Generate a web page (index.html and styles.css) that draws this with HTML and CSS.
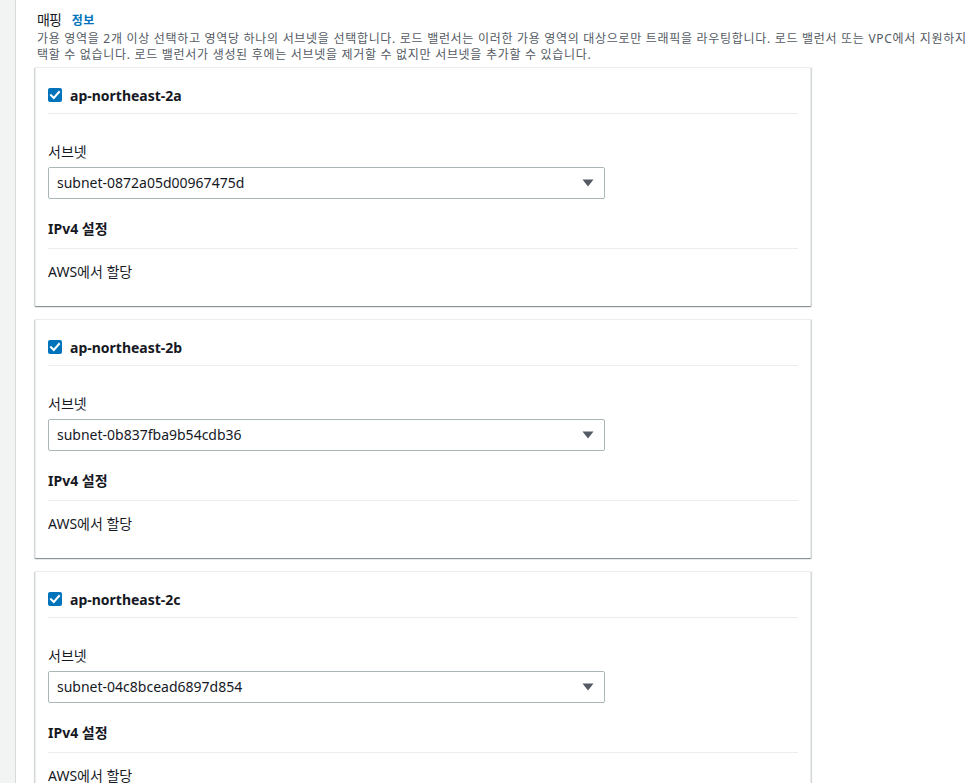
FILE: index.html
```html
<!DOCTYPE html>
<html lang="ko">
<head>
<meta charset="utf-8">
<title>매핑</title>
<link rel="stylesheet" href="styles.css">
</head>
<body>
<div class="page">
  <div class="rail"></div>
  <main class="main">
    <div class="heading">
      <span class="heading-title">매핑</span>
      <a class="info" href="#">정보</a>
    </div>
    <p class="desc"><span class="line">가용 영역을 2개 이상 선택하고 영역당 하나의 서브넷을 선택합니다. 로드 밸런서는 이러한 가용 영역의 대상으로만 트래픽을 라우팅합니다. 로드 밸런서 또는 VPC에서 지원하지 않는 가용 영역은 선</span><span class="line">택할 수 없습니다. 로드 밸런서가 생성된 후에는 서브넷을 제거할 수 없지만 서브넷을 추가할 수 있습니다.</span></p>

    <div class="cards">
      <section class="card">
        <div class="card-head">
          <span class="checkbox"><svg viewBox="0 0 14 14" width="14" height="14"><path d="M3 7.2 L5.8 10 L11 4" fill="none" stroke="#fff" stroke-width="2" stroke-linecap="square"/></svg></span>
          <span class="zone">ap-northeast-2a</span>
        </div>
        <div class="card-body">
          <div class="label">서브넷</div>
          <div class="select">
            <span>subnet-0872a05d00967475d</span>
            <svg class="caret" viewBox="0 0 12 8" width="12" height="8"><path d="M0.5 0.5 H11.5 L6 7.5 Z" fill="#545b64"/></svg>
          </div>
          <div class="sub-title">IPv4 설정</div>
          <div class="value">AWS에서 할당</div>
        </div>
      </section>

      <section class="card">
        <div class="card-head">
          <span class="checkbox"><svg viewBox="0 0 14 14" width="14" height="14"><path d="M3 7.2 L5.8 10 L11 4" fill="none" stroke="#fff" stroke-width="2" stroke-linecap="square"/></svg></span>
          <span class="zone">ap-northeast-2b</span>
        </div>
        <div class="card-body">
          <div class="label">서브넷</div>
          <div class="select">
            <span>subnet-0b837fba9b54cdb36</span>
            <svg class="caret" viewBox="0 0 12 8" width="12" height="8"><path d="M0.5 0.5 H11.5 L6 7.5 Z" fill="#545b64"/></svg>
          </div>
          <div class="sub-title">IPv4 설정</div>
          <div class="value">AWS에서 할당</div>
        </div>
      </section>

      <section class="card">
        <div class="card-head">
          <span class="checkbox"><svg viewBox="0 0 14 14" width="14" height="14"><path d="M3 7.2 L5.8 10 L11 4" fill="none" stroke="#fff" stroke-width="2" stroke-linecap="square"/></svg></span>
          <span class="zone">ap-northeast-2c</span>
        </div>
        <div class="card-body">
          <div class="label">서브넷</div>
          <div class="select">
            <span>subnet-04c8bcead6897d854</span>
            <svg class="caret" viewBox="0 0 12 8" width="12" height="8"><path d="M0.5 0.5 H11.5 L6 7.5 Z" fill="#545b64"/></svg>
          </div>
          <div class="sub-title">IPv4 설정</div>
          <div class="value">AWS에서 할당</div>
        </div>
      </section>
    </div>
  </main>
</div>
</body>
</html>
```

FILE: styles.css
```css
html, body {
  margin: 0;
  padding: 0;
  height: 100%;
  overflow: hidden;
  background: #ffffff;
}

body {
  font-family: "Noto Sans", "Noto Sans CJK KR", sans-serif;
  color: #16191f;
  font-size: 14px;
  line-height: 20px;
}

.page {
  display: flex;
  min-height: 100%;
}

.rail {
  flex: 0 0 15px;
  background: #f2f3f3;
  border-right: 1px solid #d5dbdb;
}

.main {
  flex: 1;
  padding: 10px 0 0 19px;
  min-width: 0;
  overflow: hidden;
}

.heading {
  display: flex;
  align-items: baseline;
  padding-left: 2px;
}

.heading-title {
  font-size: 14px;
  letter-spacing: -1px;
}

.info {
  margin-left: 11px;
  font-size: 12px;
  font-weight: 700;
  color: #0073bb;
  text-decoration: none;
  letter-spacing: 0.5px;
}

.desc {
  margin: 0;
  padding-left: 2px;
  font-size: 12px;
  line-height: 16px;
  color: #545b64;
  letter-spacing: 0.7px;
}

.line {
  display: block;
  white-space: nowrap;
}

.cards {
  display: flex;
  flex-direction: column;
  gap: 13px;
  width: 776px;
  margin-top: 4px;
}

.card {
  border: 1px solid #eaeded;
  border-bottom: none;
  box-shadow: 0 1px 1px 0 rgba(0, 28, 36, 0.3), 1px 1px 1px 0 rgba(0, 28, 36, 0.12), -1px 1px 1px 0 rgba(0, 28, 36, 0.12);
  padding: 0 12px;
  height: 239px;
  box-sizing: border-box;
  background: #fff;
}

.card-head {
  display: flex;
  align-items: center;
  padding: 18px 0 7px;
  border-bottom: 1px solid #eaeded;
}

.checkbox {
  width: 14px;
  height: 14px;
  border-radius: 2px;
  background: #0073bb;
  display: flex;
  margin-top: -2px;
}

.zone {
  margin-left: 8px;
  font-weight: 700;
}

.card-body {
  padding-top: 28px;
}

.label {
  line-height: 20px;
}

.select {
  margin-top: 5px;
  width: 557px;
  height: 32px;
  box-sizing: border-box;
  border: 1px solid #aab7b8;
  border-radius: 2px;
  display: flex;
  align-items: center;
  justify-content: space-between;
  padding: 0 10px 0 8px;
}

.caret {
  display: block;
}

.sub-title {
  margin-top: 20px;
  font-weight: 700;
  padding-bottom: 9px;
  border-bottom: 1px solid #eaeded;
}

.value {
  margin-top: 13px;
}
```
